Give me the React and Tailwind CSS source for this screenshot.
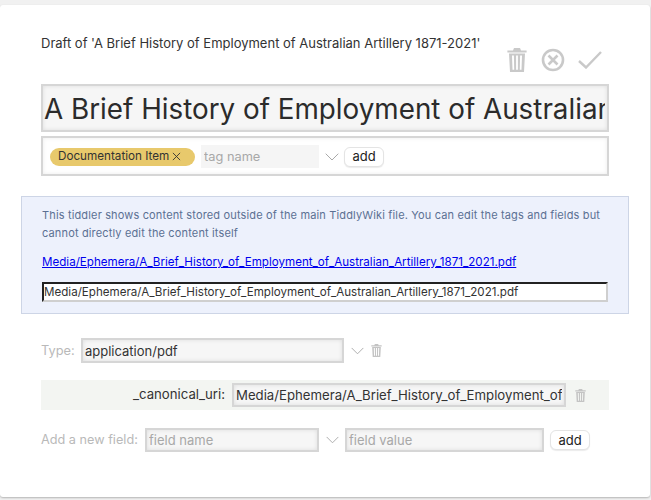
const font = { fontFamily: '"Inter", "Liberation Sans", sans-serif' };

function Trash({ className }) {
  return (
    <svg viewBox="0 0 20 24" className={className} fill="currentColor">
      <path d="M7 0h6l1 2.4h5.6v2H.4v-2H6z" />
      <path d="M2 5.4h16L17 24H3zM5 7.5l.5 14.3h1.7L6.9 7.5zM9.1 7.5v14.3h1.8V7.5zM13.1 7.5l-.3 14.3h1.7L15 7.5z" fillRule="evenodd" />
    </svg>
  );
}

function Chevron({ className }) {
  return (
    <svg viewBox="0 0 14 8" className={className} fill="none" stroke="currentColor" strokeWidth="1">
      <path d="M.7.7 7 7l6.3-6.3" />
    </svg>
  );
}

const inputCls =
  "block border-2 border-[#d6d6d6] bg-[#f6f6f6] shadow-[inset_0_0_4px_rgba(0,0,0,0.1)] outline-none text-[#333] placeholder:text-[#a8a8a8] text-[14px] px-[2px] min-w-0";

function AddButton() {
  return (
    <button className="h-[20px] w-[40px] rounded-[6px] border border-[#e4e4e4] bg-white text-[13px] leading-none text-[#222] shadow-[0_1px_1px_rgba(0,0,0,0.08)]">
      add
    </button>
  );
}

export default function App() {
  return (
    <div style={font} className="h-[500px] w-[651px] overflow-hidden bg-[#f1f1f1] pt-[5px] pr-[1px]">
      <div className="h-[492px] rounded-[3px] bg-white shadow-[0_1px_2px_rgba(0,0,0,0.25)] pt-[28px]">
        <div className="px-[41px] flex h-[51px] items-start justify-between">
          <h1 className="text-[13px] leading-[20px] font-normal text-[#333]">
            Draft of 'A Brief History of Employment of Australian Artillery 1871-2021'
          </h1>
          <div className="mt-[15px] mr-[7px] flex items-center shrink-0 -ml-[40px]">
            <Trash className="h-[24px] w-[20px] text-[#c9c9c9]" />
            <svg viewBox="0 0 24 24" className="ml-[14px] h-[24px] w-[24px] text-[#c9c9c9]" fill="none" stroke="currentColor" strokeWidth="2.6">
              <circle cx="12" cy="12" r="10" />
              <path d="m7.5 7.5 9 9M16.5 7.5l-9 9" />
            </svg>
            <svg viewBox="0 0 24 18" className="ml-[13px] h-[18px] w-[24px] text-[#c9c9c9]" fill="none" stroke="currentColor" strokeWidth="2.4">
              <path d="M1 10l7 6.5L23 1" />
            </svg>
          </div>
        </div>

        <div className="px-[41px]">
          <input
            readOnly
            value="A Brief History of Employment of Australian Artillery 1871-2021"
            className={`${inputCls} w-[568px] h-[48px] !pl-[1px] pt-[1px] !text-[27.8px] !text-[#2b2b2b]`}
          />
          <div className="mt-[4px] flex h-[40px] w-[568px] items-center border-2 border-[#d6d6d6] bg-white pt-[1px] shadow-[inset_0_0_4px_rgba(0,0,0,0.08)] pl-[7px]">
            <span className="flex h-[18px] w-[145px] shrink-0 items-center rounded-full bg-[#e8c96c] pl-[8px] text-[11.7px] text-[#333]">
              Documentation Item
              <svg viewBox="0 0 10 10" className="ml-[3px] h-[9px] w-[9px]" fill="none" stroke="currentColor" strokeWidth="1">
                <path d="m1 1 8 8M9 1l-8 8" />
              </svg>
            </span>
            <input
              readOnly
              placeholder="tag name"
              className="ml-[6px] h-[23px] w-[118px] bg-[#f5f5f5] px-[3px] text-[12.8px] outline-none placeholder:text-[#a8a8a8]"
            />
            <Chevron className="ml-[6px] h-[8px] w-[14px] text-[#a9a9a9]" />
            <span className="ml-[5px] flex"><AddButton /></span>
          </div>
        </div>

        <div className="mx-[21px] mt-[20px] h-[118px] w-[608px] border border-[#cdd5e6] bg-[#edf1fc] px-[20px] pt-[9px]">
          <p className="text-[11px] leading-[18px] tracking-[0.15px] text-[#5b7093]">
            This tiddler shows content stored outside of the main TiddlyWiki file. You can edit the tags and fields but cannot directly edit the content itself
          </p>
          <a href="#" className="mt-[12px] block text-[11.6px] leading-[17px] text-[#0000ee] underline">
            Media/Ephemera/A_Brief_History_of_Employment_of_Australian_Artillery_1871_2021.pdf
          </a>
          <input
            readOnly
            value="Media/Ephemera/A_Brief_History_of_Employment_of_Australian_Artillery_1871_2021.pdf"
            className="mt-[11px] block h-[20px] w-[566px] border-2 border-t-[#222] border-l-[#222] border-r-[#cfcfcf] border-b-[#cfcfcf] bg-white px-0 text-[11.6px] text-[#333] outline-none"
          />
        </div>

        <div className="mt-[24px] flex h-[25px] items-center px-[41px]">
          <span className="w-[40px] text-[12.8px] text-[#b9b9b9]">Type:</span>
          <input readOnly value="application/pdf" className={`${inputCls} w-[263px] h-[25px] !text-[13px]`} />
          <Chevron className="ml-[7px] h-[8px] w-[13px] text-[#a9a9a9]" />
          <Trash className="ml-[7px] h-[13px] w-[11px] text-[#c4c4c4]" />
        </div>

        <div className="mx-[41px] mt-[17px] flex h-[30px] w-[568px] items-center bg-[#f3f5f2]">
          <span className="w-[191px] pr-[7px] text-right text-[13.2px] text-[#333]">_canonical_uri:</span>
          <input
            readOnly
            value="Media/Ephemera/A_Brief_History_of_Employment_of_Australian_Artillery_1871_2021.pdf"
            className={`${inputCls} w-[334px] h-[24px] !text-[13.2px]`}
          />
          <Trash className="ml-[9px] h-[13px] w-[11px] text-[#c4c4c4]" />
        </div>

        <div className="mt-[18px] flex h-[24px] items-center px-[41px]">
          <span className="w-[104px] text-[12.7px] text-[#b9b9b9]">Add a new field:</span>
          <input readOnly placeholder="field name" className={`${inputCls} w-[174px] h-[24px] !text-[13px]`} />
          <Chevron className="ml-[7px] h-[8px] w-[13px] text-[#a9a9a9]" />
          <input readOnly placeholder="field value" className={`${inputCls} ml-[6px] w-[199px] h-[24px] !text-[13px]`} />
          <span className="ml-[6px] flex"><AddButton /></span>
        </div>
      </div>
    </div>
  );
}
